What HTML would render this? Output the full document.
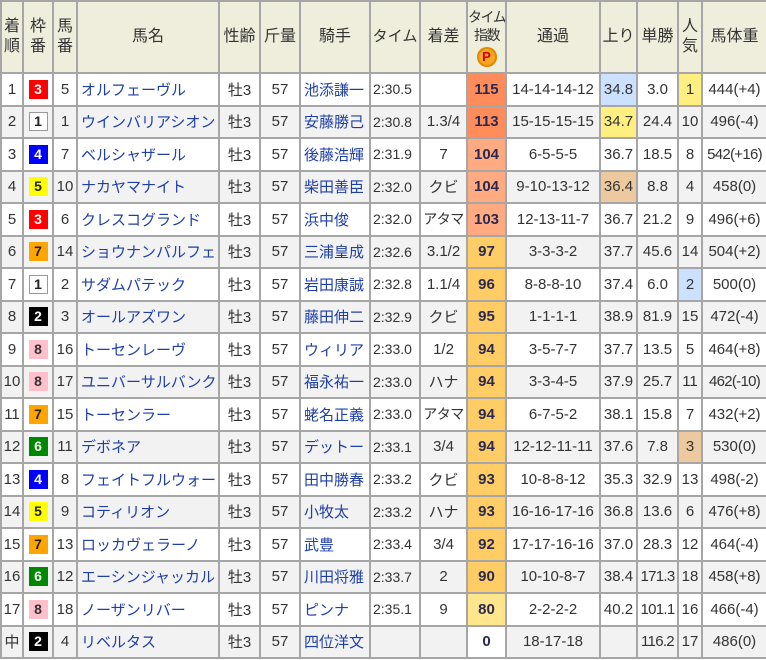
<!DOCTYPE html><html><head><meta charset="utf-8"><style>
body{margin:0;background:#fff;font-family:"Liberation Sans","Noto Sans CJK JP",sans-serif;}
table{border-collapse:collapse;table-layout:fixed;width:766px;font-size:15px;color:#333;}
td,th{border:2px solid #a6a6a6;padding:0;text-align:center;white-space:nowrap;overflow:hidden;}
th{background:#efeedc;font-weight:normal;height:70px;line-height:20px;color:#333;font-size:16px}
th.t{font-size:14px;line-height:18px;letter-spacing:-1.5px}
tr.r{height:32.5px}
tr.r:nth-child(odd) td{background:#f2f2f2}
td.l{text-align:left;padding-left:3px}
td.tm{text-align:left;padding-left:2px;font-size:14px}
td.s{letter-spacing:-0.7px}
td.k{font-size:14px;letter-spacing:-0.5px}
a{color:#1e3fa8;text-decoration:none}
.w{display:inline-block;width:19px;height:19px;line-height:19px;font-weight:bold;font-size:14px;}
.w1{background:#fff;border:1px solid #999;width:17px;height:17px;line-height:17px;color:#222}
.w2{background:#000;color:#fff}.w3{background:#f00;color:#fff}.w4{background:#00f;color:#fff}
.w5{background:#ff0;color:#222}.w6{background:#080;color:#fff}.w7{background:#ffa500;color:#222}.w8{background:#ffc0cb;color:#333}
td.i{font-weight:bold;color:#2a2a50}
tr.r td.a{background:#ff8c5a!important}tr.r td.b{background:#ffaa80!important}tr.r td.c{background:#ffcc66!important}tr.r td.d{background:#ffe68c!important}tr.r td.e{background:#fff!important}
tr.r td.bl{background:#cce0ff!important}tr.r td.ye{background:#ffee80!important}tr.r td.or{background:#edc9a0!important}
.p{display:inline-block;width:20px;height:20px;border-radius:50%;background:#f5a623;color:#c00;font-weight:bold;font-size:13px;line-height:20px;margin-top:3px;letter-spacing:0;box-shadow:inset 0 0 0 2px #e08a00}
</style></head><body>
<table>
<colgroup><col style="width:22px"><col style="width:30px"><col style="width:24px"><col style="width:142px"><col style="width:41px"><col style="width:40px"><col style="width:70px"><col style="width:50px"><col style="width:47px"><col style="width:39px"><col style="width:94px"><col style="width:37px"><col style="width:41px"><col style="width:24px"><col style="width:65px"></colgroup>
<tr><th>着<br>順</th><th>枠<br>番</th><th>馬<br>番</th><th>馬名</th><th>性齢</th><th>斤量</th><th>騎手</th><th style="font-size:15px">タイム</th><th>着差</th><th class="t">タイム<br>指数<br><span class="p">P</span></th><th>通過</th><th>上り</th><th>単勝</th><th>人<br>気</th><th>馬体重</th></tr>
<tr class="r"><td>1</td><td><span class="w w3">3</span></td><td>5</td><td class="l"><a>オルフェーヴル</a></td><td>牡3</td><td>57</td><td class="l"><a>池添謙一</a></td><td class="tm">2:30.5</td><td></td><td class="i a">115</td><td>14-14-14-12</td><td class="bl">34.8</td><td>3.0</td><td class="ye">1</td><td>444(+4)</td></tr>
<tr class="r"><td>2</td><td><span class="w w1">1</span></td><td>1</td><td class="l"><a>ウインバリアシオン</a></td><td>牡3</td><td>57</td><td class="l"><a>安藤勝己</a></td><td class="tm">2:30.8</td><td>1.3/4</td><td class="i a">113</td><td>15-15-15-15</td><td class="ye">34.7</td><td>24.4</td><td>10</td><td>496(-4)</td></tr>
<tr class="r"><td>3</td><td><span class="w w4">4</span></td><td>7</td><td class="l"><a>ベルシャザール</a></td><td>牡3</td><td>57</td><td class="l"><a>後藤浩輝</a></td><td class="tm">2:31.9</td><td>7</td><td class="i b">104</td><td>6-5-5-5</td><td>36.7</td><td>18.5</td><td>8</td><td class="s">542(+16)</td></tr>
<tr class="r"><td>4</td><td><span class="w w5">5</span></td><td>10</td><td class="l"><a>ナカヤマナイト</a></td><td>牡3</td><td>57</td><td class="l"><a>柴田善臣</a></td><td class="tm">2:32.0</td><td>クビ</td><td class="i b">104</td><td>9-10-13-12</td><td class="or">36.4</td><td>8.8</td><td>4</td><td>458(0)</td></tr>
<tr class="r"><td>5</td><td><span class="w w3">3</span></td><td>6</td><td class="l"><a>クレスコグランド</a></td><td>牡3</td><td>57</td><td class="l"><a>浜中俊</a></td><td class="tm">2:32.0</td><td class="k">アタマ</td><td class="i b">103</td><td>12-13-11-7</td><td>36.7</td><td>21.2</td><td>9</td><td>496(+6)</td></tr>
<tr class="r"><td>6</td><td><span class="w w7">7</span></td><td>14</td><td class="l"><a>ショウナンパルフェ</a></td><td>牡3</td><td>57</td><td class="l"><a>三浦皇成</a></td><td class="tm">2:32.6</td><td>3.1/2</td><td class="i c">97</td><td>3-3-3-2</td><td>37.7</td><td>45.6</td><td>14</td><td>504(+2)</td></tr>
<tr class="r"><td>7</td><td><span class="w w1">1</span></td><td>2</td><td class="l"><a>サダムパテック</a></td><td>牡3</td><td>57</td><td class="l"><a>岩田康誠</a></td><td class="tm">2:32.8</td><td>1.1/4</td><td class="i c">96</td><td>8-8-8-10</td><td>37.4</td><td>6.0</td><td class="bl">2</td><td>500(0)</td></tr>
<tr class="r"><td>8</td><td><span class="w w2">2</span></td><td>3</td><td class="l"><a>オールアズワン</a></td><td>牡3</td><td>57</td><td class="l"><a>藤田伸二</a></td><td class="tm">2:32.9</td><td>クビ</td><td class="i c">95</td><td>1-1-1-1</td><td>38.9</td><td>81.9</td><td>15</td><td>472(-4)</td></tr>
<tr class="r"><td>9</td><td><span class="w w8">8</span></td><td>16</td><td class="l"><a>トーセンレーヴ</a></td><td>牡3</td><td>57</td><td class="l"><a>ウィリア</a></td><td class="tm">2:33.0</td><td>1/2</td><td class="i c">94</td><td>3-5-7-7</td><td>37.7</td><td>13.5</td><td>5</td><td>464(+8)</td></tr>
<tr class="r"><td>10</td><td><span class="w w8">8</span></td><td>17</td><td class="l"><a>ユニバーサルバンク</a></td><td>牡3</td><td>57</td><td class="l"><a>福永祐一</a></td><td class="tm">2:33.0</td><td>ハナ</td><td class="i c">94</td><td>3-3-4-5</td><td>37.9</td><td>25.7</td><td>11</td><td class="s">462(-10)</td></tr>
<tr class="r"><td>11</td><td><span class="w w7">7</span></td><td>15</td><td class="l"><a>トーセンラー</a></td><td>牡3</td><td>57</td><td class="l"><a>蛯名正義</a></td><td class="tm">2:33.0</td><td class="k">アタマ</td><td class="i c">94</td><td>6-7-5-2</td><td>38.1</td><td>15.8</td><td>7</td><td>432(+2)</td></tr>
<tr class="r"><td>12</td><td><span class="w w6">6</span></td><td>11</td><td class="l"><a>デボネア</a></td><td>牡3</td><td>57</td><td class="l"><a>デットー</a></td><td class="tm">2:33.1</td><td>3/4</td><td class="i c">94</td><td>12-12-11-11</td><td>37.6</td><td>7.8</td><td class="or">3</td><td>530(0)</td></tr>
<tr class="r"><td>13</td><td><span class="w w4">4</span></td><td>8</td><td class="l"><a>フェイトフルウォー</a></td><td>牡3</td><td>57</td><td class="l"><a>田中勝春</a></td><td class="tm">2:33.2</td><td>クビ</td><td class="i c">93</td><td>10-8-8-12</td><td>35.3</td><td>32.9</td><td>13</td><td>498(-2)</td></tr>
<tr class="r"><td>14</td><td><span class="w w5">5</span></td><td>9</td><td class="l"><a>コティリオン</a></td><td>牡3</td><td>57</td><td class="l"><a>小牧太</a></td><td class="tm">2:33.2</td><td>ハナ</td><td class="i c">93</td><td>16-16-17-16</td><td>36.8</td><td>13.6</td><td>6</td><td>476(+8)</td></tr>
<tr class="r"><td>15</td><td><span class="w w7">7</span></td><td>13</td><td class="l"><a>ロッカヴェラーノ</a></td><td>牡3</td><td>57</td><td class="l"><a>武豊</a></td><td class="tm">2:33.4</td><td>3/4</td><td class="i c">92</td><td>17-17-16-16</td><td>37.0</td><td>28.3</td><td>12</td><td>464(-4)</td></tr>
<tr class="r"><td>16</td><td><span class="w w6">6</span></td><td>12</td><td class="l"><a>エーシンジャッカル</a></td><td>牡3</td><td>57</td><td class="l"><a>川田将雅</a></td><td class="tm">2:33.7</td><td>2</td><td class="i c">90</td><td>10-10-8-7</td><td>38.4</td><td class="s">171.3</td><td>18</td><td>458(+8)</td></tr>
<tr class="r"><td>17</td><td><span class="w w8">8</span></td><td>18</td><td class="l"><a>ノーザンリバー</a></td><td>牡3</td><td>57</td><td class="l"><a>ピンナ</a></td><td class="tm">2:35.1</td><td>9</td><td class="i d">80</td><td>2-2-2-2</td><td>40.2</td><td class="s">101.1</td><td>16</td><td>466(-4)</td></tr>
<tr class="r"><td>中</td><td><span class="w w2">2</span></td><td>4</td><td class="l"><a>リベルタス</a></td><td>牡3</td><td>57</td><td class="l"><a>四位洋文</a></td><td class="tm"></td><td></td><td class="i e">0</td><td>18-17-18</td><td></td><td class="s">116.2</td><td>17</td><td>486(0)</td></tr>
</table>
</body></html>
